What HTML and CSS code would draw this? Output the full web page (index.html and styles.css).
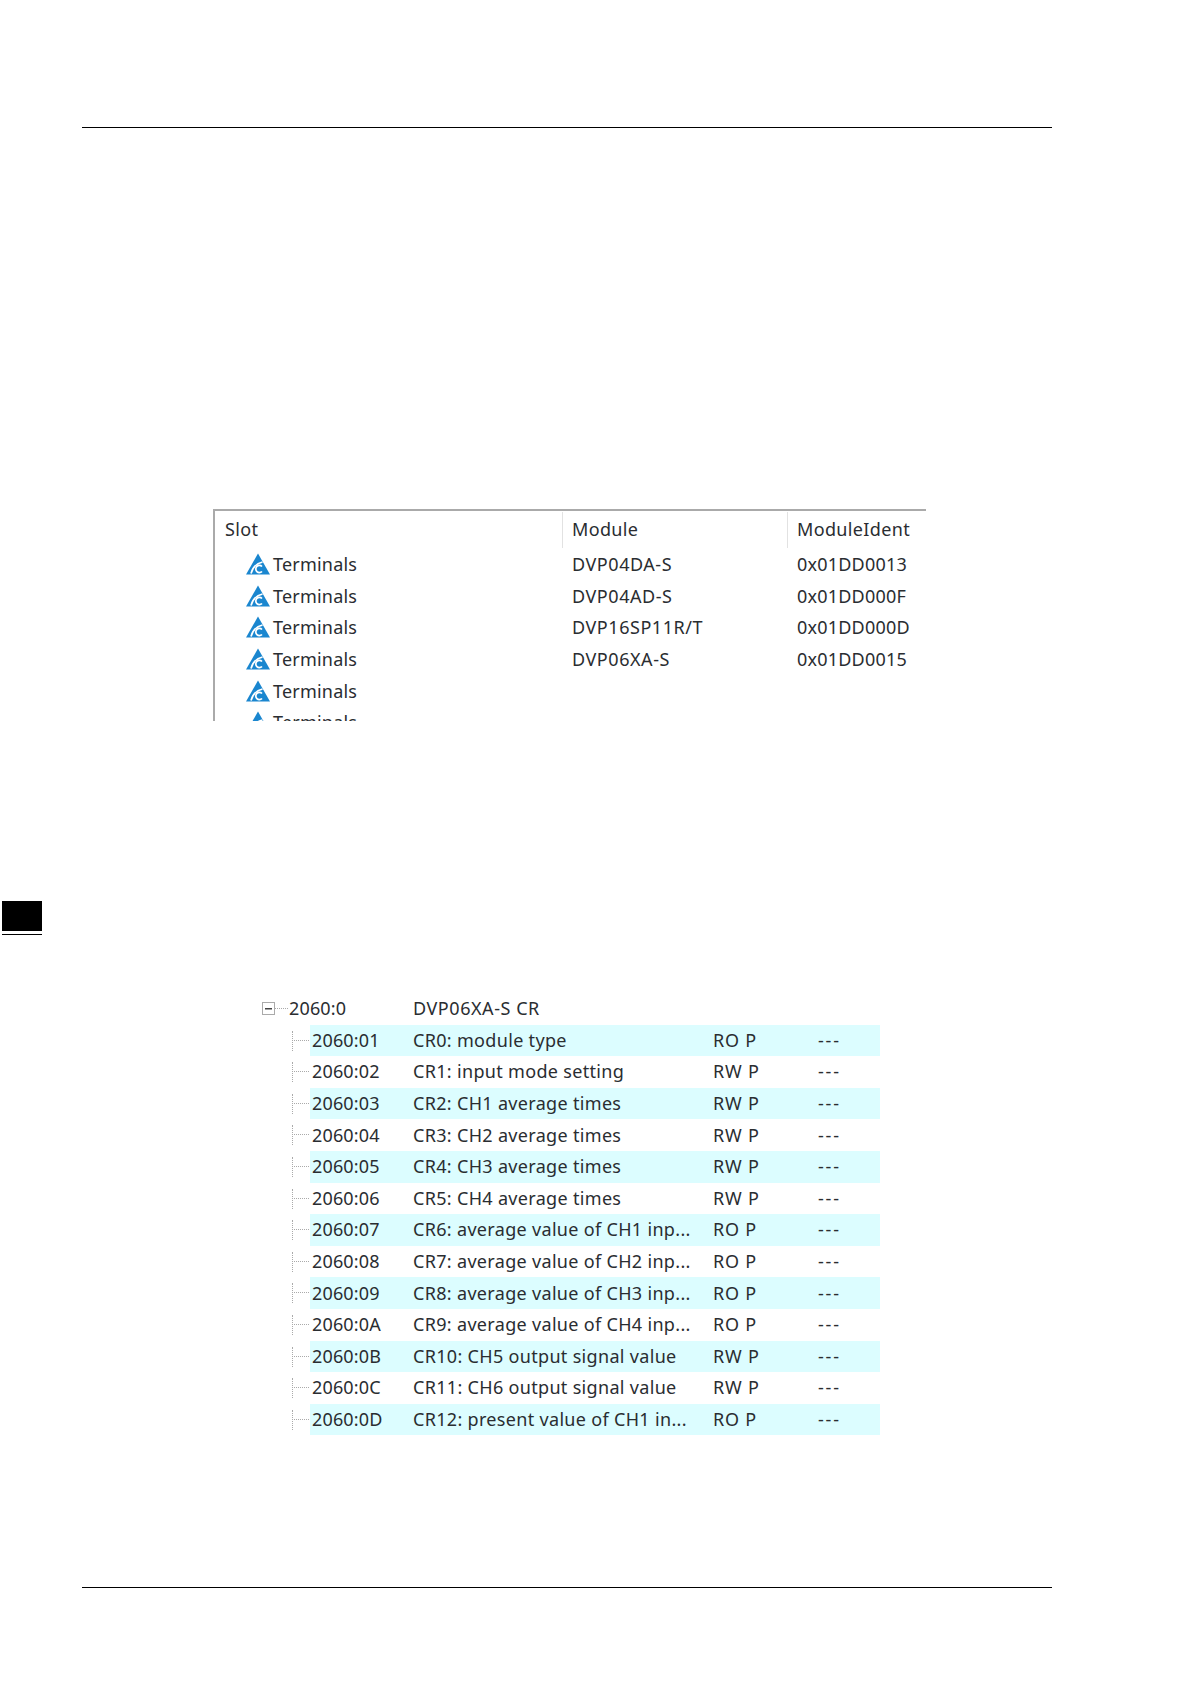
FILE: index.html
```html
<!DOCTYPE html>
<html lang="en">
<head>
<meta charset="utf-8">
<title>Slots and CR parameters</title>
<link rel="stylesheet" href="styles.css">
</head>
<body>
<svg class="defs" width="0" height="0" aria-hidden="true">
  <symbol id="tri" viewBox="0 0 24 22">
    <path d="M12 .5 L24 21.500 H0 Z" fill="#1a86cf"/>
    <path d="M5 20.500 C6.500 15 10.500 10.500 16.500 9" fill="none" stroke="#fff" stroke-width="1.700"/>
    <path d="M16 13.500 A3.600 3.600 0 1 0 16 18.500" fill="none" stroke="#fff" stroke-width="1.700"/>
  </symbol>
</svg>

<div class="side-tab"></div>

<main class="page">
  <hr class="rule rule-top">

  <section class="slots">
    <div class="slots-head">
      <div class="sh sh-slot">Slot</div>
      <div class="sh sh-module">Module</div>
      <div class="sh sh-ident">ModuleIdent</div>
    </div>
    <div class="slot-row"><div class="c-slot"><svg class="tri"><use href="#tri"/></svg><span>Terminals</span></div><div class="c-module">DVP04DA-S</div><div class="c-ident">0x01DD0013</div></div>
    <div class="slot-row"><div class="c-slot"><svg class="tri"><use href="#tri"/></svg><span>Terminals</span></div><div class="c-module">DVP04AD-S</div><div class="c-ident">0x01DD000F</div></div>
    <div class="slot-row"><div class="c-slot"><svg class="tri"><use href="#tri"/></svg><span>Terminals</span></div><div class="c-module">DVP16SP11R/T</div><div class="c-ident">0x01DD000D</div></div>
    <div class="slot-row"><div class="c-slot"><svg class="tri"><use href="#tri"/></svg><span>Terminals</span></div><div class="c-module">DVP06XA-S</div><div class="c-ident">0x01DD0015</div></div>
    <div class="slot-row"><div class="c-slot"><svg class="tri"><use href="#tri"/></svg><span>Terminals</span></div><div class="c-module"></div><div class="c-ident"></div></div>
    <div class="slot-row"><div class="c-slot"><svg class="tri"><use href="#tri"/></svg><span>Terminals</span></div><div class="c-module"></div><div class="c-ident"></div></div>
  </section>

  <section class="tree">
    <div class="t-row t-root"><span class="exp"></span><span class="dash-root"></span><span class="t-id">2060:0</span><span class="t-name">DVP06XA-S CR</span></div>
    <div class="t-row t-child alt"><span class="t-id">2060:01</span><span class="t-name">CR0: module type</span><span class="t-acc">RO P</span><span class="t-val">---</span></div>
    <div class="t-row t-child"><span class="t-id">2060:02</span><span class="t-name">CR1: input mode setting</span><span class="t-acc">RW P</span><span class="t-val">---</span></div>
    <div class="t-row t-child alt"><span class="t-id">2060:03</span><span class="t-name">CR2: CH1 average times</span><span class="t-acc">RW P</span><span class="t-val">---</span></div>
    <div class="t-row t-child"><span class="t-id">2060:04</span><span class="t-name">CR3: CH2 average times</span><span class="t-acc">RW P</span><span class="t-val">---</span></div>
    <div class="t-row t-child alt"><span class="t-id">2060:05</span><span class="t-name">CR4: CH3 average times</span><span class="t-acc">RW P</span><span class="t-val">---</span></div>
    <div class="t-row t-child"><span class="t-id">2060:06</span><span class="t-name">CR5: CH4 average times</span><span class="t-acc">RW P</span><span class="t-val">---</span></div>
    <div class="t-row t-child alt"><span class="t-id">2060:07</span><span class="t-name">CR6: average value of CH1 inp...</span><span class="t-acc">RO P</span><span class="t-val">---</span></div>
    <div class="t-row t-child"><span class="t-id">2060:08</span><span class="t-name">CR7: average value of CH2 inp...</span><span class="t-acc">RO P</span><span class="t-val">---</span></div>
    <div class="t-row t-child alt"><span class="t-id">2060:09</span><span class="t-name">CR8: average value of CH3 inp...</span><span class="t-acc">RO P</span><span class="t-val">---</span></div>
    <div class="t-row t-child"><span class="t-id">2060:0A</span><span class="t-name">CR9: average value of CH4 inp...</span><span class="t-acc">RO P</span><span class="t-val">---</span></div>
    <div class="t-row t-child alt"><span class="t-id">2060:0B</span><span class="t-name">CR10: CH5 output signal value</span><span class="t-acc">RW P</span><span class="t-val">---</span></div>
    <div class="t-row t-child"><span class="t-id">2060:0C</span><span class="t-name">CR11: CH6 output signal value</span><span class="t-acc">RW P</span><span class="t-val">---</span></div>
    <div class="t-row t-child alt"><span class="t-id">2060:0D</span><span class="t-name">CR12: present value of CH1 in...</span><span class="t-acc">RO P</span><span class="t-val">---</span></div>
  </section>

  <hr class="rule rule-bottom">
</main>
</body>
</html>
```

FILE: styles.css
```css
* { box-sizing: border-box; }
html, body { margin: 0; padding: 0; background: #fff; }
body {
  width: 1191px;
  height: 1684px;
  overflow: hidden;
  position: relative;
  font-family: "Noto Sans", "Open Sans", sans-serif;
  font-size: 18px;
  letter-spacing: .35px;
  color: #2a2d31;
}
.defs { position: absolute; }
.page { display: flow-root; padding: 127px 0 0 82px; }

.rule { width: 970px; height: 1px; margin: 0; border: 0; background: #000; }
.rule-bottom { margin-top: 152px; }

.side-tab {
  position: absolute;
  left: 2px;
  top: 901px;
  width: 40px;
  height: 34px;
  background: linear-gradient(#000 0 30px, #fff 30px 33px, #000 33px);
}

.slots {
  margin: 381px 0 0 131px;
  width: 713px;
  height: 212px;
  overflow: hidden;
  border-top: 2px solid #aaa;
  border-left: 2px solid #aaa;
}
.slots-head { display: grid; grid-template-columns: 347px 225px 1fr; height: 37px; }
.sh { display: flex; align-items: flex-start; line-height: 37px; }
.sh-slot { padding-left: 10px; }
.sh-module, .sh-ident { padding-left: 9px; border-left: 1px solid #e2e2e2; margin-top: 1px; line-height: 35px; }
.slot-row { display: grid; grid-template-columns: 348px 225px 1fr; height: 31.7px; align-items: center; }
.c-slot { display: flex; align-items: center; padding-left: 31px; }
.c-slot span { margin-left: 3px; letter-spacing: .2px; }
.tri { width: 24px; height: 22px; flex: none; }
.c-module { padding-left: 9px; letter-spacing: .55px; }
.c-ident { padding-left: 9px; letter-spacing: .2px; }

.tree { margin: 272px 0 0 0; }
.t-row { display: flex; align-items: center; height: 31.6px; width: 798px; position: relative; padding-bottom: 1px; }
.t-root { padding-left: 180px; }
.exp {
  width: 13px;
  height: 13px;
  flex: none;
  border: 1px solid #aaa;
  background: linear-gradient(#444, #444) center / 7px 1.5px no-repeat;
}
.dash-root { width: 13px; margin-right: 1px; flex: none; border-top: 1px dotted #aaa; }
.t-child { margin-left: 228px; width: 570px; padding-left: 2px; }
.t-child::before {
  content: "";
  position: absolute;
  left: -18px;
  top: 6px;
  height: 20px;
  border-left: 1px dotted #aaa;
}
.t-child::after {
  content: "";
  position: absolute;
  left: -18px;
  top: 15px;
  width: 17px;
  border-top: 1px dotted #aaa;
}
.alt { background: #dcfdff; }
.t-id { flex: none; width: 101px; letter-spacing: .15px; }
.t-root .t-id { width: 124px; }
.t-name { flex: none; width: 300px; letter-spacing: .32px; }
.t-root .t-name { letter-spacing: .55px; }
.t-acc { flex: none; width: 105px; letter-spacing: .8px; }
.t-val { flex: none; letter-spacing: 1.8px; }
```
